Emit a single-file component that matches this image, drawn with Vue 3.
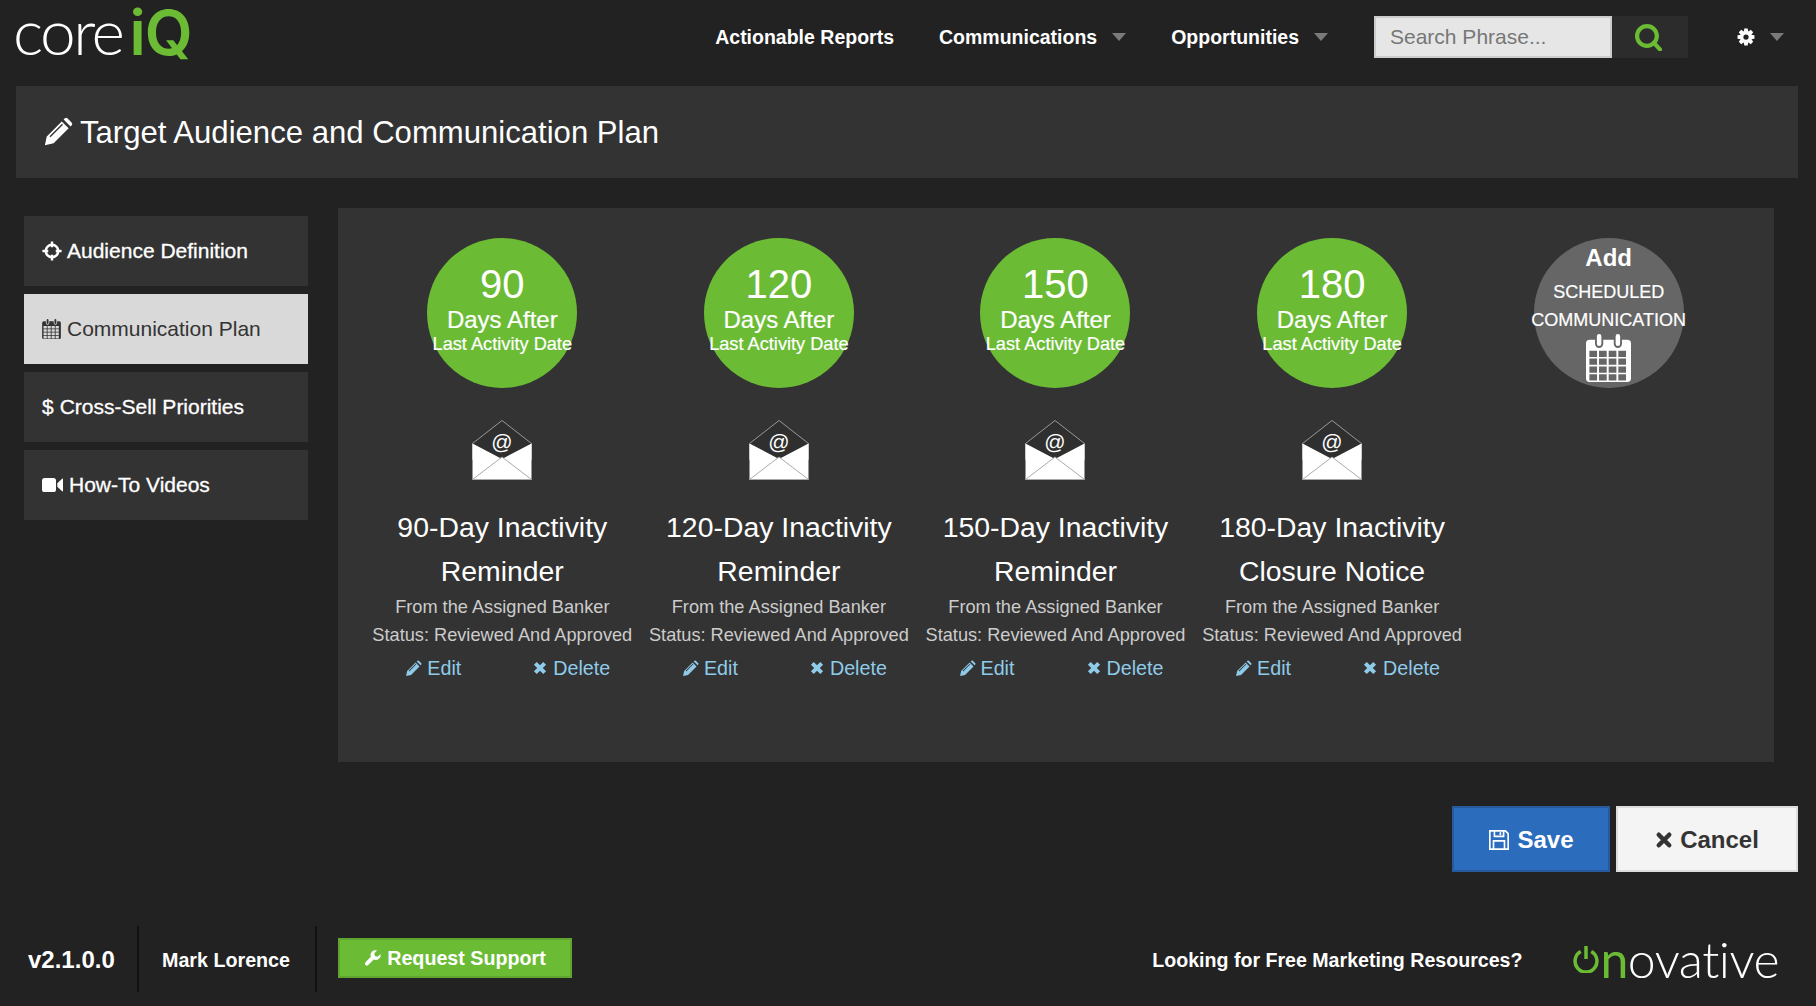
<template>
  <div class="page">
    <header class="topbar">
      <div class="logo"><span class="logo-core">core</span><span class="logo-iq">iQ</span></div>
      <nav class="nav">
        <a class="nav-link">Actionable Reports</a>
        <a class="nav-link">Communications<i class="caret"></i></a>
        <a class="nav-link">Opportunities<i class="caret"></i></a>
      </nav>
      <div class="search">
        <input class="search-input" placeholder="Search Phrase..." />
        <button class="search-btn">
          <svg viewBox="0 0 26 26" class="search-icon"><circle cx="11.5" cy="11.5" r="9.5" /><path d="M18 18l6 6.5" /></svg>
        </button>
      </div>
      <div class="settings">
        <svg viewBox="0 0 24 24" class="gear"><path :d="gearPath" fill-rule="evenodd" /></svg>
        <i class="caret"></i>
      </div>
    </header>

    <section class="title-bar">
      <svg viewBox="0 0 24 24" class="title-icon"><path :d="icons.pencil" fill-rule="evenodd" /></svg>
      <h1>Target Audience and Communication Plan</h1>
    </section>

    <main class="content">
      <aside class="side">
        <a class="side-item">
          <svg viewBox="0 0 24 24" class="side-icon cross"><circle cx="12" cy="12" r="7.5" /><path d="M12 .5v7M12 16.500v7M.5 12h7M16.500 12h7" /></svg>
          Audience Definition
        </a>
        <a class="side-item active">
          <svg viewBox="0 0 24 25.600" class="side-icon cal"><path :d="calendarPath" fill-rule="evenodd" /></svg>
          Communication Plan
        </a>
        <a class="side-item"><span class="dollar">$</span>Cross-Sell Priorities</a>
        <a class="side-item">
          <svg viewBox="0 0 24 18" class="side-icon video"><path :d="icons.video" /></svg>
          How-To Videos
        </a>
      </aside>

      <section class="panel">
        <div v-for="p in plans" :key="p.days" class="col">
          <div class="circle">
            <div class="c-num">{{ p.days }}</div>
            <div class="c-days">Days After</div>
            <div class="c-last">Last Activity Date</div>
          </div>
          <svg viewBox="0 0 60 60" class="envelope">
            <path d="M.5 23.500L30 .5l29.500 23v16h-59z" fill="#2f2f2f" stroke="#999" />
            <path d="M.5 23.500L30 39l29.500-15.500V59.500H.5z" fill="#fff" />
            <path d="M.5 59.500L30 37l29.500 22.500H.5z" fill="#fff" stroke="#aaa" />
            <text x="30" y="29" text-anchor="middle" class="at">@</text>
          </svg>
          <h2>{{ p.name }}<br />{{ p.second }}</h2>
          <p class="sub">From the Assigned Banker</p>
          <p class="sub">Status: Reviewed And Approved</p>
          <div class="links">
            <a class="link">
              <svg viewBox="0 0 24 24" class="link-icon"><path :d="icons.pencil" fill-rule="evenodd" /></svg>
              Edit
            </a>
            <a class="link">
              <svg viewBox="0 0 24 24" class="link-icon x"><path d="M5 5l14 14M19 5L5 19" /></svg>
              Delete
            </a>
          </div>
        </div>
        <div class="col">
          <div class="circle add">
            <div class="a-add">Add</div>
            <div class="a-line first">SCHEDULED</div>
            <div class="a-line">COMMUNICATION</div>
            <svg viewBox="0 0 24 25.600" class="a-cal"><path :d="calendarPath" fill-rule="evenodd" /></svg>
          </div>
        </div>
      </section>
    </main>

    <div class="actions">
      <button class="btn save">
        <svg viewBox="0 0 24 24" class="save-icon"><path d="M2 2h17l3 3v17H2zM7 2v6h10V2M13.500 3.500v3M6 22v-9h12v9" /></svg>
        Save
      </button>
      <button class="btn cancel">
        <svg viewBox="0 0 24 24" class="cancel-icon"><path d="M5 5l14 14M19 5L5 19" /></svg>
        Cancel
      </button>
    </div>

    <footer class="footer">
      <span class="version">v2.1.0.0</span>
      <span class="user">Mark Lorence</span>
      <a class="support">
        <svg viewBox="0 0 24 24" class="support-icon"><path :d="icons.wrench" /></svg>
        Request Support
      </a>
      <span class="resources">Looking for Free Marketing Resources?</span>
      <div class="brand">
        <svg viewBox="0 0 32 32" class="power"><path d="M10 7.500a12.500 12.500 0 1 0 12 0M16 1v15" /></svg>
        <span class="brand-n">n</span><span class="brand-rest">ovative</span>
      </div>
    </footer>
  </div>
</template>

<script setup>
const icons = {
  pencil: 'M1.500 22.500L3 15.500 15 3.500l5.500 5.500-12 12zM5.200 15.300l.8.800L16 6.100l-.8-.8zM16.500 2l1-1a1.500 1.500 0 0 1 2 0l3.500 3.500a1.500 1.500 0 0 1 0 2l-1 1z',
  video: 'M0 4a3 3 0 0 1 3-3h10a3 3 0 0 1 3 3v10a3 3 0 0 1-3 3H3a3 3 0 0 1-3-3zM17.500 7L23 1.800c.5-.4 1-.2 1 .5v13.400c0 .7-.5.9-1 .5L17.500 11z',
  wrench: 'M22 6.500l-3.800 3.700-3.600-.9-.9-3.500L17.500 2a6.500 6.500 0 0 0-8.400 8.300L2 17.500a2.600 2.600 0 0 0 3.700 3.700l7.300-7.200A6.500 6.500 0 0 0 22 6.500z'
}

const plans = [
  { days: 90, name: '90-Day Inactivity', second: 'Reminder' },
  { days: 120, name: '120-Day Inactivity', second: 'Reminder' },
  { days: 150, name: '150-Day Inactivity', second: 'Reminder' },
  { days: 180, name: '180-Day Inactivity', second: 'Closure Notice' }
]

// 8 toothed cog with a hole in the middle
const buildGear = () => {
  const pts = []
  for (let i = 0; i < 8; i++) {
    const a = (i * Math.PI) / 4
    const offs = [[-0.42, 7.6], [-0.2, 11.5], [0.2, 11.5], [0.42, 7.6]]
    offs.forEach(([d, r]) => {
      pts.push(`${(12 + r * Math.cos(a + d)).toFixed(2)} ${(12 + r * Math.sin(a + d)).toFixed(2)}`)
    })
  }
  return `M${pts.join('L')}zM12 8.500a3.500 3.500 0 1 0 0 7a3.500 3.500 0 1 0 0-7z`
}
const gearPath = buildGear()

// calendar body with notches for the rings and a 4x4 grid of cells cut out
const buildCalendar = () => {
  let d = 'M2 3h2.800v2.200a2.200 2.200 0 0 0 4.400 0V3h5.600v2.200a2.200 2.200 0 0 0 4.400 0V3H22a2 2 0 0 1 2 2v18.600a2 2 0 0 1-2 2H2a2 2 0 0 1-2-2V5a2 2 0 0 1 2-2z'
  d += 'M7 0a1.200 1.200 0 0 1 1.200 1.200v4a1.200 1.200 0 0 1-2.400 0v-4A1.200 1.200 0 0 1 7 0z'
  d += 'M17 0a1.200 1.200 0 0 1 1.200 1.200v4a1.200 1.200 0 0 1-2.400 0v-4A1.200 1.200 0 0 1 17 0z'
  for (let r = 0; r < 4; r++) {
    for (let c = 0; c < 4; c++) {
      d += `M${1.800 + c * 5.150} ${8.900 + r * 4.200}h4.100v3.300h-4.100z`
    }
  }
  return d
}
const calendarPath = buildCalendar()
</script>

<style>
html, body { margin: 0; background: #222; }
</style>

<style scoped>
.page {
  width: 1816px;
  height: 1006px;
  background: #222;
  color: #fff;
  font-family: "Liberation Sans", Arial, sans-serif;
  display: flex;
  flex-direction: column;
  overflow: hidden;
}

.topbar {
  height: 86px;
  display: flex;
  align-items: flex-start;
  padding: 0 32px 0 13px;
  box-sizing: border-box;
}
.logo {
  display: flex;
  align-items: baseline;
  height: 56px;
  margin-top: 3px;
  white-space: nowrap;
}
.logo-core {
  display: inline-block;
  line-height: 56px;
  font-family: Lato, sans-serif;
  font-weight: 300;
  font-size: 64px;
  letter-spacing: -2.500px;
}
.logo-iq {
  display: inline-block;
  line-height: 56px;
  font-family: Inter, sans-serif;
  font-weight: 600;
  font-size: 62px;
  color: #6bbb35;
  margin-left: 7px;
  letter-spacing: -1px;
}
.nav {
  margin-left: auto;
  display: flex;
  gap: 45px;
  height: 74px;
  align-items: center;
}
.nav-link {
  font-size: 19.500px;
  font-weight: 700;
  display: flex;
  align-items: center;
}
.caret {
  display: inline-block;
  width: 0;
  height: 0;
  border-left: 7px solid transparent;
  border-right: 7px solid transparent;
  border-top: 8px solid #7a7a7a;
  margin-left: 15px;
}
.search {
  display: flex;
  margin: 16px 0 0 46px;
}
.search-input {
  width: 238px;
  height: 42px;
  box-sizing: border-box;
  border: 2px solid #ccc;
  background: #e6e6e6;
  padding: 0 14px;
  font: 21px "Liberation Sans", Arial, sans-serif;
  outline: none;
}
.search-input::placeholder { color: #777; opacity: 1; }
.search-btn {
  width: 76px;
  height: 42px;
  border: 0;
  padding: 0 3px 0 0;
  background: #2c2c2c;
  display: flex;
  align-items: center;
  justify-content: center;
}
.search-icon {
  width: 27px;
  height: 27px;
  fill: none;
  stroke: #6bbb35;
  stroke-width: 4;
  stroke-linecap: round;
}
.settings {
  display: flex;
  align-items: center;
  height: 74px;
  margin-left: 49px;
}
.gear { width: 18px; height: 18px; fill: #fff; }
.settings .caret { margin-left: 15px; }

.title-bar {
  height: 92px;
  margin: 0 18px 0 16px;
  background: #333;
  display: flex;
  align-items: center;
  padding-left: 27px;
}
.title-icon { width: 30px; height: 30px; fill: #fff; }
h1 {
  margin: 2px 0 0 7px;
  font-size: 31.100px;
  font-weight: 400;
}

.content {
  display: flex;
  margin-top: 30px;
  padding-left: 24px;
}
.side {
  width: 284px;
  padding-top: 8px;
  display: flex;
  flex-direction: column;
  gap: 8px;
}
.side-item {
  height: 70px;
  background: #333;
  display: flex;
  align-items: center;
  padding-left: 18px;
  font-size: 21px;
  -webkit-text-stroke: 0.3px #fff;
}
.side-item.active {
  background: #d9d9d9;
  color: #333;
  -webkit-text-stroke: 0;
}
.side-icon {
  fill: currentColor;
  margin-right: 6px;
}
.side-icon.cross {
  width: 20px;
  height: 20px;
  fill: none;
  stroke: #fff;
  stroke-width: 3;
  margin-right: 5px;
}
.side-icon.cal { width: 19px; height: 20px; }
.side-icon.video { width: 21px; height: 16px; }
.dollar { margin-right: 6px; }

.panel {
  width: 1436px;
  height: 554px;
  margin-left: 30px;
  box-sizing: border-box;
  background: #333;
  padding: 30px 27px 0 26px;
  display: flex;
}
.col {
  width: 276.600px;
  display: flex;
  flex-direction: column;
  align-items: center;
  white-space: nowrap;
}
.circle {
  width: 150px;
  height: 150px;
  border-radius: 50%;
  background: #6bbb35;
  display: flex;
  flex-direction: column;
  align-items: center;
  padding-top: 26px;
  box-sizing: border-box;
}
.c-num { font-size: 40px; line-height: 40px; }
.c-days { font-size: 24px; line-height: 32px; -webkit-text-stroke: 0.2px #fff; }
.c-last { font-size: 18.200px; line-height: 17px; -webkit-text-stroke: 0.2px #fff; }
.envelope { width: 60px; height: 60px; margin-top: 32px; }
.at { font: 21px "Liberation Sans", Arial, sans-serif; fill: #fff; }
h2 {
  margin: 25px 0 0;
  font-size: 28.400px;
  line-height: 44px;
  font-weight: 400;
  text-align: center;
}
.sub {
  margin: 0;
  font-size: 18.200px;
  line-height: 28px;
  color: #ccc;
}
.links {
  width: 276px;
  display: flex;
  margin-top: 5px;
}
.link {
  flex: 1;
  display: flex;
  align-items: center;
  justify-content: center;
  font-size: 19.700px;
  line-height: 28px;
  color: #8fcbe9;
}
.link-icon {
  width: 17px;
  height: 17px;
  fill: currentColor;
  margin-right: 5px;
}
.link-icon.x {
  fill: none;
  stroke: currentColor;
  stroke-width: 6;
  width: 16px;
  height: 16px;
}
.circle.add {
  background: #666;
  padding-top: 6px;
}
.a-add { font-size: 24px; font-weight: 700; line-height: 28px; }
.a-line { font-size: 18px; line-height: 28px; -webkit-text-stroke: 0.2px #fff; }
.a-line.first { margin-top: 6px; }
.a-cal { width: 45px; height: 48px; fill: #fff; flex: none; }

.actions {
  display: flex;
  justify-content: flex-end;
  gap: 6px;
  margin: 44px 18px 0 0;
}
.btn {
  height: 66px;
  font: 700 24px "Liberation Sans", Arial, sans-serif;
  display: flex;
  align-items: center;
  justify-content: center;
  box-sizing: border-box;
  padding: 2px 0 0;
}
.save {
  width: 158px;
  background: #2b6cbd;
  border: 2px solid #265a9c;
  color: #fff;
}
.cancel {
  width: 182px;
  background: #f4f4f4;
  border: 2px solid #ddd;
  color: #333;
}
.save-icon {
  width: 22px;
  height: 22px;
  fill: none;
  stroke: #fff;
  stroke-width: 1.800;
  margin-right: 7px;
}
.cancel-icon {
  width: 18px;
  height: 18px;
  fill: none;
  stroke: #333;
  stroke-width: 6;
  stroke-linecap: round;
  margin-right: 7px;
}

.footer {
  display: flex;
  align-items: center;
  height: 66px;
  margin-top: 54px;
  padding-left: 28px;
}
.version {
  font-size: 24px;
  font-weight: 700;
  width: 109px;
  height: 66px;
  line-height: 68px;
  border-right: 2px solid #111;
  white-space: nowrap;
}
.user {
  font-size: 19.700px;
  font-weight: 700;
  width: 178px;
  height: 66px;
  line-height: 68px;
  padding-left: 23px;
  box-sizing: border-box;
  border-right: 2px solid #111;
  white-space: nowrap;
}
.support {
  margin-left: 21px;
  width: 234px;
  height: 40px;
  box-sizing: border-box;
  background: #6bbb35;
  border: 2px solid #5fa52f;
  display: flex;
  align-items: center;
  justify-content: center;
  font-size: 19.700px;
  font-weight: 700;
  margin-top: -2px;
}
.support-icon { width: 18px; height: 18px; fill: #fff; margin-right: 5px; }
.resources {
  margin-left: auto;
  margin-top: 2px;
  font-size: 19.600px;
  font-weight: 700;
}
.brand {
  display: flex;
  align-items: center;
  margin: 0 37px 0 50px;
  line-height: 40px;
  font-size: 50px;
  font-family: Lato, sans-serif;
  font-weight: 300;
  letter-spacing: -0.500px;
}
.power {
  width: 28px;
  height: 28px;
  fill: none;
  stroke: #6bbb35;
  stroke-width: 4;
  margin-right: 0;
}
.brand-n { color: #6bbb35; font-weight: 400; }
</style>
